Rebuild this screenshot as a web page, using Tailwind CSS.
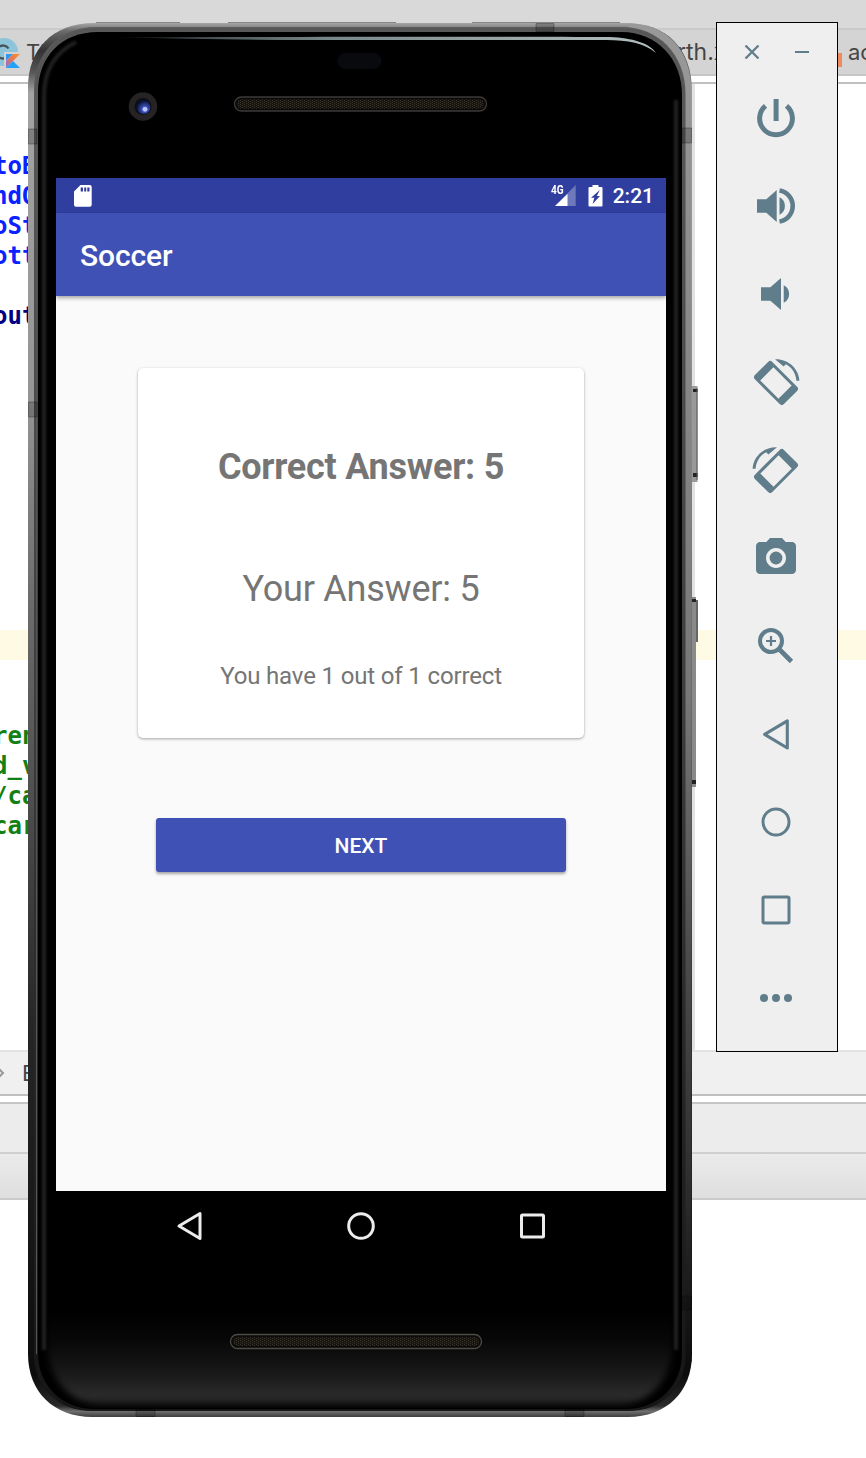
<!DOCTYPE html>
<html lang="en">
<head>
<meta charset="utf-8">
<title>Soccer</title>
<script src="https://cdn.jsdelivr.net/npm/@tailwindcss/browser@4"></script>
</head>
<body class="bg-white">
<div class="relative w-[866px] h-[1458px] overflow-hidden bg-white font-['Roboto',sans-serif]">

  <!-- Editor behind the emulator -->
  <div class="flex flex-col h-full">
    <div class="h-[30px] shrink-0 bg-[#d9d9d9] border-b-2 border-[#c9c9c9]"></div>
    <div class="h-[46px] shrink-0 bg-[#d4d4d4] border-b-2 border-[#c6c6c6] flex items-center text-[22px] text-[#454545] font-['Inter',sans-serif]">
      <svg class="w-[26px] h-[44px] shrink-0" viewBox="0 30 26 44">
        <defs><linearGradient id="kt" x1="0" y1="1" x2="1" y2="0"><stop offset="0" stop-color="#7f6fe0"/><stop offset=".5" stop-color="#e8735a"/><stop offset="1" stop-color="#f89820"/></linearGradient></defs>
        <circle cx="4" cy="52" r="14" fill="#8cc4da"/>
        <path d="M8.500 48.500A6.500 6.500 0 1 0 8.500 55.500" fill="none" stroke="#47555c" stroke-width="2.300"/>
        <path d="M4 52H22V70H4z" fill="#d4d4d4"/>
        <path d="M6 54H13L6 61z" fill="#2f9bf0"/><path d="M13 54H20L6 68V61z" fill="url(#kt)"/><path d="M6 68L13 61L20 68z" fill="#22a3f7"/>
      </svg>
      <span class="w-[651px] shrink-0">Th</span>
      <span class="w-[161px] shrink-0 text-[23px]">rth.x</span>
      <span class="w-[4px] h-[14px] bg-[#ee8a5c] mt-4 shrink-0"></span>
      <span class="pl-[6px]">ac</span>
    </div>
    <div class="h-[8px] shrink-0 bg-white border-b-2 border-[#c0c0c0]"></div>
    <div class="h-[966px] shrink-0 pt-[66px] relative text-[24px] leading-[30px] font-bold font-['DejaVu_Sans_Mono',monospace]">
      <div class="absolute left-[692px] top-0 w-[3px] h-full bg-[#e2e2e2]"></div>
      <div class="-ml-[7px] h-[120px] pt-px text-[#0a22ff]"><div>toB</div><div>ndO</div><div>oSt</div><div>ott</div></div>
      <div class="-ml-[7px] h-[60px] pt-[31px] text-[#000080]">out</div>
      <div class="mt-[300px] h-[30px] bg-[#fffae3] relative"></div>
      <div class="-ml-[7px] pt-[61px] text-[#128012]"><div>ren</div><div>d_v</div><div>/ca</div><div>car</div></div>
    </div>
    <div class="h-[46px] shrink-0 bg-[#f0f0f0] border-t-2 border-t-[#e3e3e3] border-b-2 border-b-[#bfbfbf] flex items-center text-[22px] text-[#454545] font-['Inter',sans-serif]">
      <svg class="w-[22px] h-[10px]" viewBox="0 0 22 10"><path d="M-1 1L3 5L-1 9" fill="none" stroke="#999" stroke-width="2"/></svg><span>B</span>
    </div>
    <div class="h-[8px] shrink-0 bg-white border-b-2 border-[#c6c6c6]"></div>
    <div class="h-[50px] shrink-0 bg-[#ececec] border-b-2 border-[#cfcfcf]"></div>
    <div class="h-[46px] shrink-0 bg-linear-to-b from-[#ebebeb] to-[#dedede] border-b-2 border-[#cbcbcb]"></div>
  </div>

  <!-- Phone -->
  <div class="absolute left-[28px] top-[23px] w-[664px] h-[1394px] pl-[28px] pt-[155px]">
    <svg class="absolute left-0 top-0 w-[664px] h-[1394px] overflow-visible" viewBox="28 23 664 1394">
      <defs>
        <linearGradient id="frame" gradientUnits="userSpaceOnUse" x1="0" y1="23" x2="0" y2="1417">
          <stop offset="0" stop-color="#a6a6a6"/><stop offset=".006" stop-color="#6a6a6a"/><stop offset=".02" stop-color="#333"/><stop offset=".035" stop-color="#555"/><stop offset=".05" stop-color="#a3a3a3"/><stop offset=".27" stop-color="#959595"/><stop offset=".42" stop-color="#6b6b6b"/><stop offset=".55" stop-color="#505050"/><stop offset=".72" stop-color="#262626"/><stop offset=".97" stop-color="#0c0c0c"/><stop offset=".992" stop-color="#2a2a2a"/><stop offset=".996" stop-color="#6e6e6e"/><stop offset="1" stop-color="#3c3c3c"/>
        </linearGradient>
        <linearGradient id="frameR" gradientUnits="userSpaceOnUse" x1="0" y1="23" x2="0" y2="1370">
          <stop offset="0" stop-color="#999"/><stop offset=".5" stop-color="#777"/><stop offset=".7" stop-color="#4a4a4a"/><stop offset=".85" stop-color="#303030"/><stop offset="1" stop-color="#0c0c0c"/>
        </linearGradient>
        <linearGradient id="edge" gradientUnits="userSpaceOnUse" x1="0" y1="23" x2="0" y2="1417">
          <stop offset="0" stop-color="#5a5a5a"/><stop offset=".5" stop-color="#3c3c3c"/><stop offset=".8" stop-color="#222"/><stop offset="1" stop-color="#161616"/>
        </linearGradient>
        <linearGradient id="chin" gradientUnits="userSpaceOnUse" x1="0" y1="1310" x2="0" y2="1408">
          <stop offset="0" stop-color="#000"/><stop offset=".3" stop-color="#070707"/><stop offset=".65" stop-color="#191919"/><stop offset=".88" stop-color="#2c2c2c"/><stop offset="1" stop-color="#111"/>
        </linearGradient>
        <linearGradient id="shine" x1="0" x2="1"><stop offset="0" stop-color="#222b2c"/><stop offset=".4" stop-color="#7a898b"/><stop offset="1" stop-color="#b4bfc1"/></linearGradient>
        <filter id="soft" x="-10%" y="-5%" width="120%" height="110%" color-interpolation-filters="sRGB"><feGaussianBlur stdDeviation="3"/></filter>
        <filter id="softline" x="-5%" y="-2%" width="110%" height="104%" color-interpolation-filters="sRGB"><feGaussianBlur stdDeviation="1.200"/></filter>
        <radialGradient id="lens" cx=".6" cy=".65" r=".6"><stop offset="0" stop-color="#a5b4ff"/><stop offset=".35" stop-color="#3a50b8"/><stop offset="1" stop-color="#0a1030"/></radialGradient>
        <pattern id="mesh" width="4" height="2" patternUnits="userSpaceOnUse"><path d="M0 0H4V2H0z" fill="#16140f"/><path d="M0 0h1v1h-1zM2 1h1v1h-1z" fill="#38342c"/></pattern>
        <clipPath id="glass"><path d="M38 92C38 57 61 32 98 32H622C656 32 682 58 682 95V1354C682 1385 658 1408 626 1408H94C62 1408 38 1385 38 1354Z"/></clipPath>
      </defs>
      <!-- side buttons -->
      <path d="M691 386h6.500v96h-6.500z" fill="#999"/><path d="M693 389h4.500v3h-4.500zM693 473h4.500v4h-4.500z" fill="#222"/><path d="M697 388v92" stroke="#555" stroke-width="1"/>
      <path d="M691 597h5v190h-5z" fill="#8a8a8a"/><path d="M691 599h5v3h-5zM691 780h5v4h-5z" fill="#222"/><path d="M697 600v42" stroke="#666" stroke-width="2"/>
      <path d="M96 22.500H180M228 22.500H396M472 22.500H620" stroke="#858585" stroke-width="1"/>
      <path d="M28 87C28 50 52 23 94 23H626C666 23 692 48 692 92V1354C692 1392 666 1417 628 1417H92C54 1417 28 1392 28 1354Z" fill="url(#frame)"/>
      <path d="M626 23.500C666 23.500 691.500 48 691.500 92V1362H682V92Z" fill="url(#frameR)"/>
      <path d="M34 90C34 54 58 27 96 27H622C658 27 685.500 54 685.500 94V1354C685.500 1388 662 1411 628 1411H92C58 1411 34 1388 34 1354Z" fill="url(#edge)"/>
      <path d="M36.500 1354V90C36.500 56 60 29.500 97 29.500H623C658 29.500 683.500 56 683.500 94" fill="none" stroke="#555" stroke-width="1"/>
      <path d="M38 92C38 57 61 32 98 32H622C656 32 682 58 682 95V1354C682 1385 658 1409 626 1409H94C62 1409 38 1385 38 1354Z" fill="#000"/>
      <g clip-path="url(#glass)">
        <path d="M48 1300H672V1348C672 1380 648 1405 618 1405H102C72 1405 48 1380 48 1348Z" fill="url(#chin)" filter="url(#soft)"/>
        <path d="M44 1350V96C44 70 56 52 76 42M676 1350V100" fill="none" stroke="#202020" stroke-width="4" filter="url(#softline)"/>
      </g>
      <path d="M118 37.500C300 36.500 500 36.500 610 37C632 38 650 43 656 53C644 43 628 40 606 40H300C240 40 180 38.500 118 37.500Z" fill="url(#shine)"/>
      <!-- antenna bands -->
      <path d="M28.500 129h8.500v15h-8.500zM28.500 402h8.500v15h-8.500zM682 128h9.500v15h-9.500zM682 1296h9.500v14h-9.500zM536 23.500h18v8h-18zM136 1409h19v7.500h-19zM565 1409h19v7.500h-19z" fill="#000" fill-opacity=".2" stroke="#000" stroke-opacity=".35" stroke-width=".8"/>
      <!-- sensor, camera, speakers -->
      <rect x="337.500" y="53" width="44" height="16" rx="8" fill="#090a0e"/>
      <circle cx="143" cy="106.500" r="14.300" fill="#252324"/><circle cx="143" cy="106.500" r="8.500" fill="#0c0e18"/><circle cx="143.500" cy="107" r="7" fill="url(#lens)"/><circle cx="145" cy="109.300" r="2.400" fill="#b9c5ff"/>
      <rect x="234.500" y="97" width="252" height="14" rx="7" fill="#0b0b0b" stroke="#3d3a37" stroke-width="1.300"/><rect x="237" y="99.500" width="247" height="9" rx="4.500" fill="url(#mesh)"/>
      <rect x="230.500" y="1334.500" width="251" height="14" rx="7" fill="#0b0b0b" stroke="#4c4a46" stroke-width="1.300"/><rect x="233" y="1337" width="246" height="9" rx="4.500" fill="url(#mesh)"/>
    </svg>

    <!-- Screen -->
    <div class="relative w-[610px] flex flex-col">
      <div class="h-[1013px] bg-[#fafafa] flex flex-col overflow-hidden">
        <div class="h-[35px] shrink-0 bg-[#303f9f] flex items-center pl-[18px] pr-[12px] text-white">
          <svg class="w-[18px] h-[22px]" viewBox="0 0 18 22"><path fill="#fff" fill-rule="evenodd" d="M6.500 0H15.700Q17.700 0 17.700 2V19.700Q17.700 21.700 15.700 21.700H2Q0 21.700 0 19.700V6.500ZM6.700 2.500V6.500H9V2.500ZM10.200 2.500V6.500H12.200V2.500ZM13.300 2.500V6.500H15.500V2.500Z"/></svg>
          <div class="ml-auto flex items-center">
            <div class="relative w-[26px] h-[22px]">
              <span class="absolute left-[1px] top-0 text-[12px] leading-[11px] font-bold origin-left scale-x-[.84]">4G</span>
              <svg class="w-[26px] h-[22px]" viewBox="0 0 26 22"><path d="M25.700 0V21H5Z" fill="#fff" opacity=".3"/><path d="M17.500 9V21H5Z" fill="#fff"/></svg>
            </div>
            <svg class="w-[15px] h-[22px] ml-[12px]" viewBox="0 0 15 22"><path fill="#fff" fill-rule="evenodd" d="M4.500 0H10.500V2H13.500Q14.500 2 14.500 3V20.500Q14.500 21.500 13.500 21.500H1.500Q.5 21.500 .5 20.500V3Q.5 2 1.500 2H4.500ZM11.800 5L3 12.800H6.300L4.600 19L12 11H8.800Z"/></svg>
            <span class="ml-[10px] text-[21px] leading-[24px] font-medium mt-[1px]">2:21</span>
          </div>
        </div>
        <div class="h-[83px] shrink-0 bg-[#3f51b5] shadow-[0_2px_4px_rgba(0,0,0,.35)] flex items-center pl-[24px] pt-[2px] text-white text-[30px] tracking-[-.1px] font-medium">Soccer</div>
        <div class="flex flex-col items-center pt-[72px] text-[#757575]">
          <div class="w-[446px] h-[370px] bg-white rounded-[5px] shadow-[0_1px_3px_rgba(0,0,0,.35)] flex flex-col items-center pt-[78px]">
            <div class="text-[36px] leading-[42px] font-bold tracking-[-.24px]">Correct Answer: 5</div>
            <div class="mt-[80px] text-[36px] leading-[42px] tracking-[-.22px]">Your Answer: 5</div>
            <div class="mt-[51px] text-[24px] leading-[30px] tracking-[-.15px]">You have 1 out of 1 correct</div>
          </div>
          <div class="mt-[80px] w-[410px] h-[54px] bg-[#3f51b5] rounded-[3px] shadow-[0_2px_3px_rgba(0,0,0,.35)] flex items-center justify-center text-white text-[21px] font-medium pt-[3px]">NEXT</div>
        </div>
      </div>
      <div class="h-[70px] flex items-center justify-between pl-[119px] pr-[119px]">
        <svg class="w-[30px] h-[30px]" viewBox="0 0 30 30"><path d="M25 2.500V27.500L4 15Z" fill="none" stroke="#ececec" stroke-width="3" stroke-linejoin="round"/></svg>
        <svg class="w-[30px] h-[30px]" viewBox="0 0 30 30"><circle cx="15" cy="15" r="12.300" fill="none" stroke="#ececec" stroke-width="3"/></svg>
        <svg class="w-[30px] h-[30px]" viewBox="0 0 30 30"><rect x="4.500" y="4" width="22" height="22" rx="1" fill="none" stroke="#ececec" stroke-width="3"/></svg>
      </div>
    </div>
  </div>

  <!-- Emulator toolbar -->
  <div class="absolute left-[716px] top-[22px] w-[122px] h-[1030px] bg-[#efefef] border border-black text-[#607d8b] flex flex-col items-center pr-[2px]">
    <div class="h-[58px] w-full flex items-center justify-between pl-[27px] pr-[26px]">
      <svg class="w-[16px] h-[16px]" viewBox="0 0 16 16"><path d="M1.500 1.500L14.500 14.500M14.500 1.500L1.500 14.500" stroke="currentColor" stroke-width="2.300"/></svg>
      <svg class="w-[14px] h-[16px]" viewBox="0 0 14 16"><path d="M0 8H14" stroke="currentColor" stroke-width="2"/></svg>
    </div>
    <div class="flex flex-col gap-[40px] pt-[13px]">
      <svg class="size-[48px]" viewBox="0 0 48 48"><path d="M13.500 11.800A16.400 16.400 0 1 0 34.500 11.800M24.100 5V27" fill="none" stroke="currentColor" stroke-width="5"/></svg>
      <svg class="size-[48px]" viewBox="0 0 48 48"><path fill="currentColor" d="M5 17.300H14.300L24.700 8V40L14.300 30.700H5ZM27.500 15.300A9.700 9.700 0 0 1 27.500 32.700Z"/><path d="M27.500 8.500A15.700 15.700 0 0 1 27.500 39.500" fill="none" stroke="currentColor" stroke-width="4.600"/></svg>
      <svg class="size-[48px]" viewBox="0 0 48 48"><path fill="currentColor" d="M9 17.300H18.400L29 8V40L18.400 30.700H9ZM31.700 15.300A9.700 9.700 0 0 1 31.700 32.700Z"/></svg>
      <svg class="size-[48px] overflow-visible" viewBox="0 0 48 48"><path fill="currentColor" fill-rule="evenodd" transform="translate(24 25) rotate(45)" d="M-17.500 -12.300H17.500Q20.500 -12.300 20.500 -9.300V9.300Q20.500 12.300 17.500 12.300H-17.500Q-20.500 12.300 -20.500 9.300V-9.300Q-20.500 -12.300 -17.500 -12.300ZM-12.900 -9.200V9.400H12.900V-9.200Z"/><path fill="currentColor" d="M23 1.300C36 .8 46.800 10.500 47.400 22.700H44.400C43.900 15.300 39.800 9 33.800 6.200L31.600 8.500Z"/></svg>
      <svg class="size-[48px] overflow-visible -scale-x-100" viewBox="0 0 48 48"><path fill="currentColor" fill-rule="evenodd" transform="translate(24 25) rotate(45)" d="M-17.500 -12.300H17.500Q20.500 -12.300 20.500 -9.300V9.300Q20.500 12.300 17.500 12.300H-17.500Q-20.500 12.300 -20.500 9.300V-9.300Q-20.500 -12.300 -17.500 -12.300ZM-12.900 -9.200V9.400H12.900V-9.200Z"/><path fill="currentColor" d="M23 1.300C36 .8 46.800 10.500 47.400 22.700H44.400C43.900 15.300 39.800 9 33.800 6.200L31.600 8.500Z"/></svg>
      <svg class="size-[48px]" viewBox="0 0 24 24"><circle cx="12" cy="12" r="3.200" fill="currentColor"/><path fill="currentColor" d="M9 2L7.170 4H4c-1.100 0-2 .9-2 2v12c0 1.100.9 2 2 2h16c1.100 0 2-.9 2-2V6c0-1.100-.9-2-2-2h-3.170L15 2H9zm3 15c-2.760 0-5-2.240-5-5s2.240-5 5-5 5 2.240 5 5-2.240 5-5 5z"/></svg>
      <svg class="size-[48px]" viewBox="0 0 48 48" fill="none" stroke="currentColor"><circle cx="19" cy="19" r="11" stroke-width="4"/><path d="M27 27L39.500 39.500" stroke-width="4.600"/><path d="M14 19H24M19 14V24" stroke-width="2.200"/></svg>
      <svg class="size-[48px]" viewBox="0 0 48 48" fill="none" stroke="currentColor" stroke-width="3.100" stroke-linejoin="round"><path d="M35.300 10.800V38L12.600 24.400Z"/></svg>
      <svg class="size-[48px]" viewBox="0 0 48 48" fill="none" stroke="currentColor" stroke-width="3"><circle cx="24" cy="24" r="13"/></svg>
      <svg class="size-[48px]" viewBox="0 0 48 48" fill="none" stroke="currentColor" stroke-width="3"><rect x="11" y="11" width="26" height="26" rx="1.500"/></svg>
      <svg class="size-[48px]" viewBox="0 0 48 48" fill="currentColor"><circle cx="12" cy="24" r="4"/><circle cx="24" cy="24" r="4"/><circle cx="36" cy="24" r="4"/></svg>
    </div>
  </div>
</div>
</body>
</html>
